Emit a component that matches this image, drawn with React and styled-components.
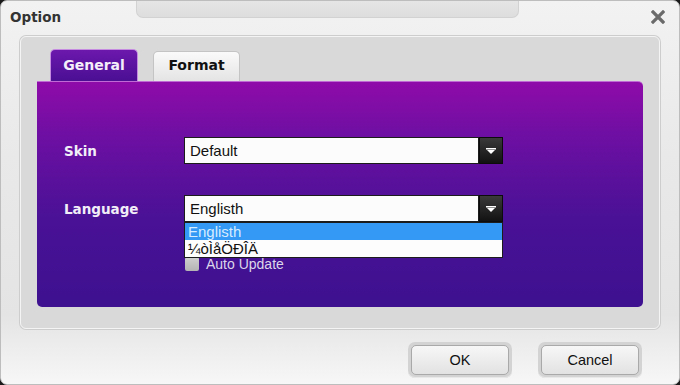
import styled, { createGlobalStyle } from "styled-components"

const GlobalStyle = createGlobalStyle`
  html, body {
    margin: 0;
    padding: 0;
    background: #1a1a1a;
  }
`

const Window = styled.div`
  width: 680px;
  height: 385px;
  box-sizing: border-box;
  border-radius: 7px;
  border: 1px solid #bdbdbd;
  background: linear-gradient(#f2f2f2 0%, #e9e9e9 40%, #e4e4e4 82%, #f7f7f7 100%);
  display: flex;
  flex-direction: column;
  overflow: hidden;
  font-family: "Liberation Sans", Arial, sans-serif;
`

const TitleBar = styled.div`
  height: 35px;
  display: grid;
  grid-template-columns: 135px 383px 1fr 36px;
  align-items: start;
`

const Title = styled.div`
  padding: 8px 0 0 9px;
  font-family: "DejaVu Sans", sans-serif;
  font-weight: bold;
  font-size: 13.5px;
  color: #333;
`

const TitleNotch = styled.div`
  height: 18px;
  margin-top: -1px;
  box-sizing: border-box;
  border: 1px solid #d2d2d2;
  border-top: none;
  border-radius: 0 0 7px 7px;
  background: linear-gradient(#e6e6e6, #dddddd);
`

const CloseButton = styled.div`
  padding: 9px 0 0 8px;
  line-height: 0;
`

const Panel = styled.div`
  margin: 0 19px;
  height: 293px;
  box-sizing: border-box;
  border: 1px solid #f4f4f4;
  border-radius: 6px;
  background: #d9d9d9;
  box-shadow: 0 0 0 1px #cdcdcd;
  padding: 12px 16px 0 16px;
  display: flex;
  flex-direction: column;
`

const TabRow = styled.div`
  display: flex;
  align-items: flex-end;
  gap: 15px;
  padding-left: 13px;
  height: 32px;
`

const Tab = styled.div`
  box-sizing: border-box;
  height: ${p => (p.$active ? "32px" : "30px")};
  width: ${p => (p.$active ? "88px" : "87px")};
  border-radius: 5px 5px 0 0;
  display: flex;
  justify-content: center;
  padding-top: ${p => (p.$active ? "7px" : "5px")};
  font-family: "DejaVu Sans", sans-serif;
  font-weight: bold;
  font-size: 14px;
  color: ${p => (p.$active ? "#f4eefa" : "#111")};
  background: ${p =>
    p.$active
      ? "linear-gradient(#6c18ad, #4a0f93)"
      : "linear-gradient(#fafafa, #e4e4e4)"};
  border: 1px solid ${p => (p.$active ? "#c58be0" : "#c4c4c4")};
  border-bottom: none;
`

const Content = styled.div`
  height: 226px;
  box-sizing: border-box;
  border-radius: 0 5px 5px 5px;
  border-top: 1px solid #c06ad6;
  background: linear-gradient(#8f0ba9 0%, #6c0fa2 25%, #4a1196 60%, #3d1190 100%);
  padding: 55px 0 0 27px;
  display: grid;
  grid-template-columns: 120px 320px;
  grid-auto-rows: min-content;
  row-gap: 31px;
  align-items: center;
`

const Label = styled.div`
  font-family: "DejaVu Sans", sans-serif;
  font-weight: bold;
  font-size: 13.5px;
  color: #f2eef8;
`

const SelectWrap = styled.div`
  position: relative;
  width: 319px;
`

const Select = styled.div`
  display: flex;
  height: 27px;
`

const Field = styled.div`
  flex: 1;
  box-sizing: border-box;
  background: #fcfcfc;
  border: 1px solid #1c1c1c;
  padding: 4px 0 0 5px;
  font-size: 15px;
  color: #111;
`

const Arrow = styled.div`
  width: 24px;
  background: linear-gradient(#3a3a3a, #121212);
  border: 1px solid #0c0c0c;
  box-sizing: border-box;
  display: flex;
  align-items: center;
  justify-content: center;
`

const DropList = styled.div`
  position: absolute;
  left: 0;
  top: 27px;
  width: 100%;
  box-sizing: border-box;
  background: #fdfdfd;
  border: 1px solid #1c1c1c;
  z-index: 2;
`

const Option = styled.div`
  height: 17px;
  line-height: 17px;
  padding-left: 3px;
  font-size: 15px;
  color: ${p => (p.$selected ? "#d6ecff" : "#111")};
  background: ${p => (p.$selected ? "#3399f5" : "transparent")};
`

const CheckRow = styled.div`
  grid-column: 2;
  margin-top: 3px;
  display: flex;
  align-items: center;
  gap: 7px;
  font-size: 14px;
  color: #dcd6ea;
`

const CheckBox = styled.div`
  width: 14px;
  height: 14px;
  border-radius: 2px;
  background: linear-gradient(#d0d0d0, #b4b4b4);
  margin-left: 1px;
`

const Footer = styled.div`
  flex: 1;
  display: flex;
  justify-content: flex-end;
  align-items: flex-start;
  gap: 26px;
  padding: 13px 37px 0 0;
`

const Button = styled.div`
  width: 104px;
  height: 36px;
  box-sizing: border-box;
  border-radius: 7px;
  background: #d3d3d3;
  padding: 3px;
  box-shadow: inset 0 -1px 0 #e8e8e8;
`

const ButtonFace = styled.div`
  height: 100%;
  box-sizing: border-box;
  border: 1px solid #a9a9a9;
  border-radius: 5px;
  background: linear-gradient(#f7f7f7, #e2e2e2);
  display: flex;
  align-items: center;
  justify-content: center;
  font-size: 14.5px;
  color: #111;
`

function ArrowIcon () {
  return (
    <svg width="10" height="6" viewBox="0 0 10 6">
      <rect x="0" y="0" width="10" height="1.5" fill="#fff" />
      <path d="M1 2 L9 2 L5 6 Z" fill="#fff" />
    </svg>
  )
}

function App () {
  return (
    <>
      <GlobalStyle />
      <Window>
        <TitleBar>
          <Title>Option</Title>
          <TitleNotch />
          <div />
          <CloseButton>
            <svg width="14" height="14" viewBox="0 0 14 14">
              <path d="M2 2 L12 12 M12 2 L2 12" stroke="#6a6a6a" strokeWidth="3.2" strokeLinecap="square" />
            </svg>
          </CloseButton>
        </TitleBar>
        <Panel>
          <TabRow>
            <Tab $active>General</Tab>
            <Tab>Format</Tab>
          </TabRow>
          <Content>
            <Label>Skin</Label>
            <SelectWrap>
              <Select>
                <Field>Default</Field>
                <Arrow><ArrowIcon /></Arrow>
              </Select>
            </SelectWrap>
            <Label>Language</Label>
            <SelectWrap>
              <Select>
                <Field>Englisth</Field>
                <Arrow><ArrowIcon /></Arrow>
              </Select>
              <DropList>
                <Option $selected>Englisth</Option>
                <Option>¼òÌåÖÐÎÄ</Option>
              </DropList>
            </SelectWrap>
            <CheckRow>
              <CheckBox />
              Auto Update
            </CheckRow>
          </Content>
        </Panel>
        <Footer>
          <Button><ButtonFace>OK</ButtonFace></Button>
          <Button><ButtonFace>Cancel</ButtonFace></Button>
        </Footer>
      </Window>
    </>
  )
}

export default App
